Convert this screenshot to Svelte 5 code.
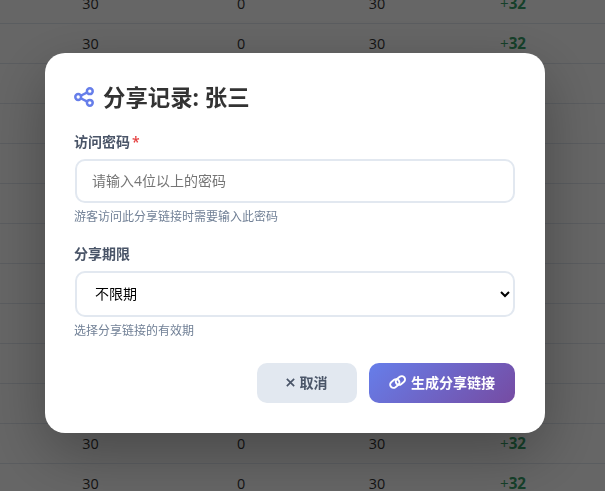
<script>
  const rows = Array.from({ length: 13 }, (_, i) => i);
</script>

<div class="page">
  <table class="records">
    <tbody>
      {#each rows as r (r)}
        <tr>
          <td>30</td>
          <td>0</td>
          <td>30</td>
          <td class="gain"><span class="plus">+</span><b>32</b></td>
        </tr>
      {/each}
    </tbody>
  </table>
</div>

<div class="overlay">
  <div class="modal">
    <h2 class="title">
      <svg class="title-icon" viewBox="0 0 20 20" aria-hidden="true">
        <path class="spokes" d="M4.2 10L15.8 4.2M4.2 10L15.8 15.8"/>
        <circle cx="4.2" cy="10" r="2.9"/>
        <circle cx="15.8" cy="4.2" r="2.9"/>
        <circle cx="15.8" cy="15.8" r="2.9"/>
      </svg>
      分享记录: 张三
    </h2>

    <div class="field">
      <label for="pw">访问密码<span class="req">*</span></label>
      <input id="pw" type="text" placeholder="请输入4位以上的密码" />
      <p class="hint">游客访问此分享链接时需要输入此密码</p>
    </div>

    <div class="field">
      <label for="exp">分享期限</label>
      <select id="exp">
        <option>不限期</option>
      </select>
      <p class="hint">选择分享链接的有效期</p>
    </div>

    <div class="actions">
      <button class="btn cancel">
        <svg class="btn-icon x" viewBox="0 0 12 12" aria-hidden="true"><path d="M2 2l8 8M10 2l-8 8"/></svg>
        取消
      </button>
      <button class="btn primary">
        <svg class="btn-icon link" viewBox="0 0 18 14" aria-hidden="true">
          <rect x="0.8" y="5.2" width="10" height="6.6" rx="3.3" transform="rotate(-38 5.8 8.5)"/>
          <rect x="6.4" y="2.2" width="10" height="6.6" rx="3.3" transform="rotate(-38 11.4 5.5)"/>
        </svg>
        生成分享链接
      </button>
    </div>
  </div>
</div>

<style>
  :global(body) {
    margin: 0;
    background: #fff;
    overflow: hidden;
    font-family: "Open Sans", "Noto Sans CJK SC", sans-serif;
  }
  .page {
    height: 491px;
    overflow: hidden;
  }
  .records {
    width: 100%;
    border-collapse: collapse;
    margin-top: -16px;
    table-layout: fixed;
    font-size: 14.4px;
    color: #333;
  }
  .records td {
    height: 39px;
    padding: 0;
    border-bottom: 1px solid #e2e8f0;
    text-align: center;
  }
  .records td:nth-child(1) { width: 181px; }
  .records td:nth-child(2) { width: 120px; }
  .records td:nth-child(3) { width: 152px; }
  .records td.gain {
    height: 37px;
    padding: 0 32px 2px 0;
    color: #38a169;
    font-size: 15.2px;
  }
  .plus { font-weight: 400; }
  .overlay {
    position: fixed;
    inset: 0;
    box-sizing: border-box;
    display: flex;
    align-items: flex-start;
    justify-content: center;
    padding: 53px 15px 0 0;
    background: rgba(0, 0, 0, 0.6);
  }
  .modal {
    box-sizing: border-box;
    width: 500px;
    padding: 30px;
    background: #fff;
    border-radius: 20px;
    box-shadow: 0 20px 60px rgba(0, 0, 0, 0.3);
  }
  .title {
    display: flex;
    align-items: center;
    gap: 9px;
    margin: 0 0 20px;
    font-size: 22.4px;
    line-height: 30px;
    font-weight: 700;
    color: #333;
  }
  .title-icon {
    width: 20px;
    height: 20px;
    flex: none;
    margin: -2px 0 0 -1px;
    fill: #fff;
    stroke: #667eea;
    stroke-width: 2.5;
  }
  .field { margin-bottom: 20px; }
  label {
    display: block;
    margin: -1px 0 7px -1px;
    font-size: 14px;
    line-height: 20px;
    font-weight: 600;
    color: #4a5568;
  }
  .req {
    margin-left: 2px;
    color: #e53e3e;
  }
  input, select {
    display: block;
    box-sizing: border-box;
    width: 100%;
    border: 2px solid #e2e8f0;
    border-radius: 10px;
    background: #fff;
    font-family: inherit;
    font-size: 14px;
    padding: 0 15px 2px;
    outline: none;
  }
  input { height: 44px; }
  input::placeholder { color: #757575; }
  select {
    height: 46px;
    padding-left: 14px;
    color: #000;
  }
  .hint {
    margin: 6px 0 0 -1px;
    font-size: 12px;
    line-height: 16px;
    color: #718096;
  }
  .actions {
    display: flex;
    justify-content: flex-end;
    gap: 12px;
    margin-top: 24px;
  }
  .btn {
    display: flex;
    align-items: center;
    justify-content: center;
    gap: 4px;
    height: 40px;
    padding: 0 0 2px;
    border: none;
    border-radius: 10px;
    font-family: inherit;
    font-size: 14px;
    font-weight: 600;
  }
  .cancel {
    width: 100px;
    padding-right: 2px;
    background: #e2e8f0;
    color: #4a5568;
  }
  .primary {
    width: 146px;
    background: linear-gradient(135deg, #667eea 0%, #764ba2 100%);
    color: #fff;
  }
  .btn-icon { flex: none; }
  .x {
    width: 11px;
    height: 11px;
    fill: none;
    stroke: currentColor;
    stroke-width: 1.8;
  }
  .link {
    width: 18px;
    height: 14px;
    fill: none;
    stroke: currentColor;
    stroke-width: 1.9;
  }
</style>
